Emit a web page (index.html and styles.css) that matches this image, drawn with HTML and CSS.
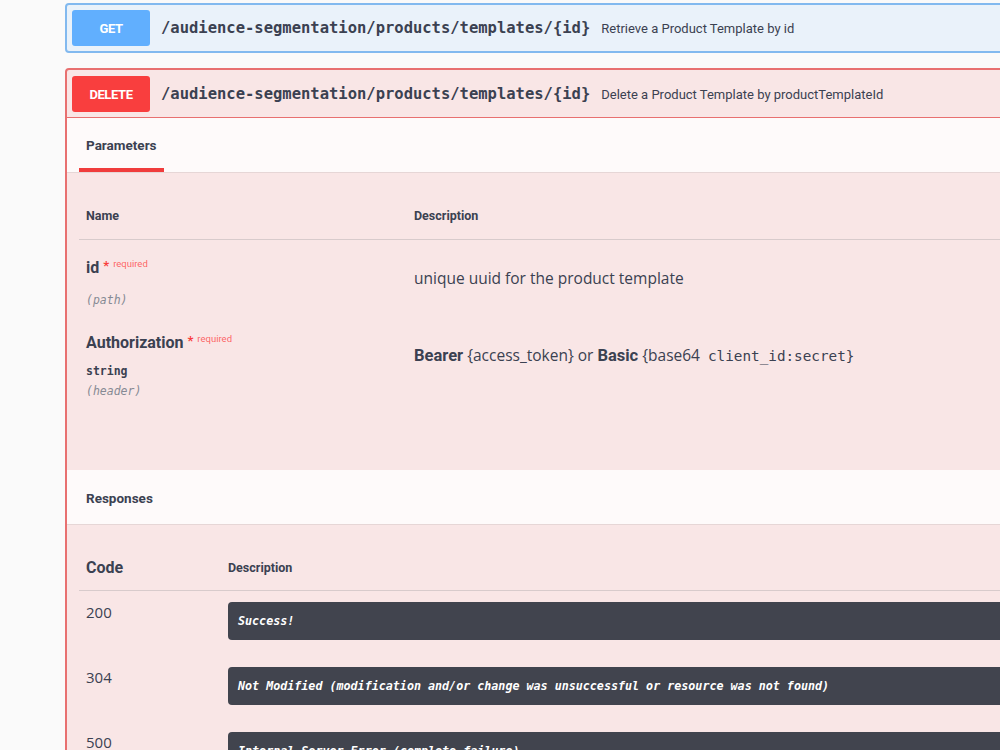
FILE: index.html
```html
<!DOCTYPE html>
<html lang="en">
<head>
  <meta charset="UTF-8">
  <title>Product Templates API</title>
  <link rel="stylesheet" href="styles.css">
</head>
<body>
  <div class="page">
    <div class="opblock get">
      <div class="summary">
        <span class="method">GET</span>
        <span class="path">/audience-segmentation/products/templates/{id}</span>
        <span class="summary-desc">Retrieve a Product Template by id</span>
      </div>
    </div>

    <div class="opblock delete">
      <div class="summary">
        <span class="method">DELETE</span>
        <span class="path">/audience-segmentation/products/templates/{id}</span>
        <span class="summary-desc">Delete a Product Template by productTemplateId</span>
      </div>

      <div class="section-head">
        <div class="tab">Parameters</div>
      </div>
      <div class="params">
        <div class="params-grid">
          <div class="th">Name</div>
          <div class="th">Description</div>

          <div class="param-name first">
            <div class="pname">id <span class="req">*</span><span class="req-label">required</span></div>
            <div class="pin gap-path">(path)</div>
          </div>
          <div class="param-desc">unique uuid for the product template</div>

          <div class="param-name second">
            <div class="pname">Authorization <span class="req">*</span><span class="req-label">required</span></div>
            <div class="ptype">string</div>
            <div class="pin gap-header">(header)</div>
          </div>
          <div class="param-desc">
            <b>Bearer</b> {access_token} or <b>Basic</b> {base64 <code>client_id:secret}</code>
          </div>
        </div>
      </div>

      <div class="section-head">
        <h4 class="section-title">Responses</h4>
      </div>
      <div class="responses">
        <div class="resp-grid">
          <div class="rh code-head">Code</div>
          <div class="rh">Description</div>
        </div>
        <div class="resp-row">
          <div class="code">200</div>
          <div class="resp-desc"><div class="md">Success!</div></div>
        </div>
        <div class="resp-row">
          <div class="code">304</div>
          <div class="resp-desc"><div class="md">Not Modified (modification and/or change was unsuccessful or resource was not found)</div></div>
        </div>
        <div class="resp-row">
          <div class="code">500</div>
          <div class="resp-desc"><div class="md">Internal Server Error (complete failure)</div></div>
        </div>
      </div>
    </div>
  </div>
</body>
</html>
```

FILE: styles.css
```css
body {
  margin: 0;
  background: #fafafa;
  color: #3b4151;
  font-family: Roboto, "Noto Sans", sans-serif;
  overflow: hidden;
  height: 750px;
}
.page {
  width: 1100px;
  padding: 3px 0 0 65px;
}
.opblock {
  border: 2px solid;
  border-radius: 4px;
  margin-bottom: 15px;
}
.get {
  border-color: #82b9ef;
  background: rgba(97, 175, 254, 0.1);
}
.delete {
  border-color: #e87070;
  background: rgba(249, 62, 62, 0.1);
}
.summary {
  display: flex;
  align-items: center;
  padding: 5px;
}
.delete .summary {
  padding: 6px 5px 5px;
  border-bottom: 1px solid #e87070;
}
.method {
  width: 78px;
  height: 36px;
  border-radius: 3px;
  display: flex;
  align-items: center;
  justify-content: center;
  color: #fff;
  font-weight: 700;
  font-size: 13px;
  letter-spacing: -0.4px;
}
.get .method {
  background: #61affe;
}
.delete .method {
  background: #f93e3e;
}
.path {
  margin-left: 11px;
  font-family: "DejaVu Sans Mono", monospace;
  font-size: 15.5px;
  font-weight: 600;
  color: #3b4151;
}
.summary-desc {
  margin-left: 11px;
  font-size: 13px;
  color: #3b4151;
}
.section-head {
  display: flex;
  height: 54px;
  padding: 0 12px;
  background: rgba(255, 255, 255, 0.8);
  border-bottom: 1px solid #e6d6d6;
}
.tab {
  display: flex;
  align-items: center;
  padding: 4px 7px 0;
  border-bottom: 4px solid #f03c3c;
  font-size: 13.5px;
  font-weight: 700;
}
.section-title {
  margin: 0;
  display: flex;
  align-items: center;
  padding: 2px 7px 0;
  font-size: 13.5px;
  font-weight: 700;
}
.params {
  padding: 34px 0 76px 12px;
}
.params-grid {
  display: grid;
  grid-template-columns: 328px 1fr;
  grid-template-rows: auto 76px 78px;
}
.th {
  padding: 0 7px 14px;
  line-height: 18px;
  font-size: 12.5px;
  font-weight: 700;
  border-bottom: 1px solid #d8cbcc;
}
.param-name {
  padding-left: 7px;
}
.param-name.first {
  padding-top: 14px;
}
.param-name.second {
  padding-top: 13px;
}
.pname {
  line-height: 20px;
  font-size: 16px;
  font-weight: 700;
}
.req {
  color: #f93e3e;
  font-size: 13px;
  vertical-align: 3px;
}
.req-label {
  color: rgba(255, 0, 0, 0.6);
  font-size: 9.5px;
  font-weight: 400;
  margin-left: 4px;
  vertical-align: 6px;
}
.ptype {
  margin-top: 10px;
  line-height: 16px;
  font-family: "DejaVu Sans Mono", monospace;
  font-size: 11.5px;
  font-weight: 600;
}
.pin {
  line-height: 16px;
  font-family: "DejaVu Sans Mono", monospace;
  font-size: 11.5px;
  font-style: italic;
  color: #868a94;
}
.gap-path {
  margin-top: 14px;
}
.gap-header {
  margin-top: 4px;
}
.param-desc {
  align-self: center;
  padding-left: 7px;
  font-family: "Open Sans", sans-serif;
  font-size: 15.5px;
}
.param-desc b {
  font-weight: 700;
  font-family: Roboto, sans-serif;
  font-size: 16.5px;
}
.param-desc code {
  font-family: "DejaVu Sans Mono", monospace;
  font-size: 14.3px;
  margin-left: 4px;
}
.responses {
  padding: 33px 0 0 12px;
}
.resp-grid {
  display: grid;
  grid-template-columns: 142px 1fr;
  border-bottom: 1px solid #d8cbcc;
  padding-bottom: 12px;
}
.rh {
  padding-left: 7px;
  line-height: 20px;
  font-size: 12.5px;
  font-weight: 700;
}
.rh.code-head {
  font-size: 16px;
}
.resp-row {
  display: grid;
  grid-template-columns: 142px 1fr;
  padding: 11px 0 16px;
}
.code {
  padding-left: 7px;
  line-height: 20px;
  font-family: "Open Sans", sans-serif;
  font-size: 15px;
}
.resp-desc {
  padding-left: 7px;
}
.md {
  height: 38px;
  display: flex;
  align-items: center;
  padding: 0 10px;
  border-radius: 4px;
  background: #41444e;
  color: #fff;
  font-family: "DejaVu Sans Mono", monospace;
  font-size: 11.7px;
  font-weight: 700;
  font-style: italic;
}
```
